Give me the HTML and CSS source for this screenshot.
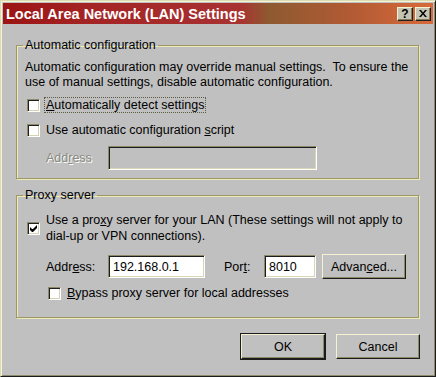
FILE: index.html
```html
<html>
    <head>
        <title>Local Area Network (LAN) Settings</title>
        <link rel="stylesheet" href="styles.css">
    </head>
    <body>
        <div class="window">
            <div class="titlebar">
                <span class="title">Local Area Network (LAN) Settings</span>
                <div class="capbtns">
                    <span class="capbtn help">?</span>
                    <span class="capbtn close">
                        <svg width="8" height="7" viewBox="0 0 8 7"><path d="M0 0h2l2 2.5 2-2.5h2l-3 3.5 3 3.5h-2l-2-2.5-2 2.5h-2l3-3.5z" fill="#000"/></svg>
                    </span>
                </div>
            </div>

            <div class="content">
                <fieldset class="group autoconf">
                    <legend>Automatic configuration</legend>
                    <p class="note">Automatic configuration may override manual settings.&nbsp; To ensure the<br>use of manual settings, disable automatic configuration.</p>
                    <div class="check">
                        <span class="box"></span>
                        <span class="lbl focus"><u>A</u>utomatically detect settings</span>
                    </div>
                    <div class="check">
                        <span class="box"></span>
                        <span class="lbl">Use automatic configuration <u>s</u>cript</span>
                    </div>
                    <div class="row addr-row">
                        <span class="disabled">Add<u>r</u>ess</span>
                        <span class="field off"></span>
                    </div>
                </fieldset>

                <fieldset class="group proxy">
                    <legend>Proxy server</legend>
                    <div class="check top">
                        <span class="box">
                            <svg width="7" height="7" viewBox="0 0 7 7"><path d="M0 2v3l2 2h1l4-4v-3l-4 4h-1z" fill="#000"/></svg>
                        </span>
                        <span class="lbl">Use a pro<u>x</u>y server for your LAN (These settings will not apply to<br>dial-up or VPN connections).</span>
                    </div>
                    <div class="row proxy-row">
                        <span class="cap addr">Addr<u>e</u>ss:</span>
                        <span class="field host">192.168.0.1</span>
                        <span class="cap port">Por<u>t</u>:</span>
                        <span class="field portnum">8010</span>
                        <span class="btn adv">Advan<u>c</u>ed...</span>
                    </div>
                    <div class="check bypass">
                        <span class="box"></span>
                        <span class="lbl"><u>B</u>ypass proxy server for local addresses</span>
                    </div>
                </fieldset>

                <div class="actions">
                    <span class="btn default">OK</span>
                    <span class="btn">Cancel</span>
                </div>
            </div>
        </div>
    </body>
</html>
```

FILE: styles.css
```css
body {
    margin: 0;
    background-color: #c0c0c0;
    color: #000000;
    font-family: "Liberation Sans", Arial, sans-serif;
    font-size: 12.5px;
    overflow: hidden;
}

.window {
    width: 436px;
    height: 377px;
    box-sizing: border-box;
    border: 1px solid;
    border-color: #dcdcb0 #1c1c1c #1c1c1c #dcdcb0;
    box-shadow: inset 1px 1px #f4f4d8, inset -1px -1px #8c8c6c;
    padding: 2px;
    background-color: #c0c0c0;
    display: flex;
    flex-direction: column;
}

.titlebar {
    height: 21px;
    display: flex;
    align-items: center;
    justify-content: space-between;
    padding: 0 2px 0 3px;
    background: linear-gradient(90deg, #9c1414 0%, #a42424 20%, #a83232 55%, #8e5a30 62%, #b05a34 80%, #d86a3a 100%);
    color: #ffffff;
}

.title {
    font-size: 14.5px;
    font-weight: bold;
}

.capbtns {
    display: flex;
    gap: 2px;
}

.capbtn {
    width: 16px;
    height: 14px;
    box-sizing: border-box;
    display: flex;
    align-items: center;
    justify-content: center;
    background-color: #c4c4b4;
    border: 1px solid;
    border-color: #f4f4d0 #202020 #202020 #f4f4d0;
    box-shadow: inset -1px -1px #807c5c;
    color: #000000;
    font-weight: bold;
    font-size: 12px;
}

.content {
    flex: 1;
    display: flex;
    flex-direction: column;
    padding: 14px 0 0 13px;
}

.group {
    width: 403px;
    box-sizing: border-box;
    margin: 0;
    padding: 0 8px 0 8px;
    border: 1px solid #9c986a;
    box-shadow: 1px 1px #ecebb8, inset 1px 1px #ecebb8;
}

.group legend {
    padding: 0 2px;
    margin-left: -2px;
}

.autoconf {
    height: 141px;
}

.proxy {
    margin-top: 9px;
    height: 130px;
}

.note {
    margin: 8px 0 0 0;
    line-height: 15px;
}

.check {
    display: flex;
    align-items: center;
    gap: 6px;
    margin-left: 2px;
    height: 16px;
}

.autoconf .check {
    margin-top: 7px;
}

.autoconf .check + .check {
    margin-top: 9px;
}

.check.top {
    height: auto;
    margin-top: 10px;
    line-height: 16px;
}

.box {
    width: 13px;
    height: 13px;
    box-sizing: border-box;
    flex: none;
    display: flex;
    align-items: center;
    justify-content: center;
    background-color: #ffffff;
    border: 1px solid;
    border-color: #8c8a68 #ffffff #ffffff #8c8a68;
    box-shadow: inset 1px 1px #202020, inset -1px -1px #d4d2b0;
}

.lbl.focus {
    outline: 1px dotted #5c5a40;
    outline-offset: 0;
    padding: 0 1px;
    margin-left: -1px;
}

.row {
    display: flex;
    align-items: center;
}

.addr-row {
    margin-top: 8px;
    padding-left: 21px;
}

.disabled {
    color: #8a8a80;
    text-shadow: 1px 1px #ffffff;
    width: 62px;
}

.field {
    box-sizing: border-box;
    height: 23px;
    display: flex;
    align-items: center;
    padding-left: 4px;
    background-color: #ffffff;
    border: 1px solid;
    border-color: #8c8a68 #ffffff #ffffff #8c8a68;
    box-shadow: inset 1px 1px #1c1c1c, inset -1px -1px #d8d6b4;
}

.field.off {
    width: 209px;
    height: 24px;
    background-color: #c0c0c0;
}

.proxy-row {
    margin-top: 10px;
    padding-left: 21px;
}

.cap.addr {
    width: 62px;
}

.field.host {
    width: 97px;
}

.cap.port {
    margin-left: 19px;
    width: 40px;
}

.field.portnum {
    width: 52px;
}

.btn {
    box-sizing: border-box;
    width: 84px;
    height: 25px;
    display: flex;
    align-items: center;
    justify-content: center;
    background-color: #c0c0c0;
    border: 1px solid;
    border-color: #f2f2d0 #1c1c1c #1c1c1c #f2f2d0;
    box-shadow: inset -1px -1px #8c8a68;
}

.btn.adv {
    margin-left: 6px;
}

.btn.default {
    outline: 1px solid #1c1c1c;
    outline-offset: 0;
}

.check.bypass {
    margin-top: 6px;
    margin-left: 23px;
}

.actions {
    display: flex;
    justify-content: flex-end;
    gap: 11px;
    margin-top: 16px;
    padding-right: 13px;
}
```
